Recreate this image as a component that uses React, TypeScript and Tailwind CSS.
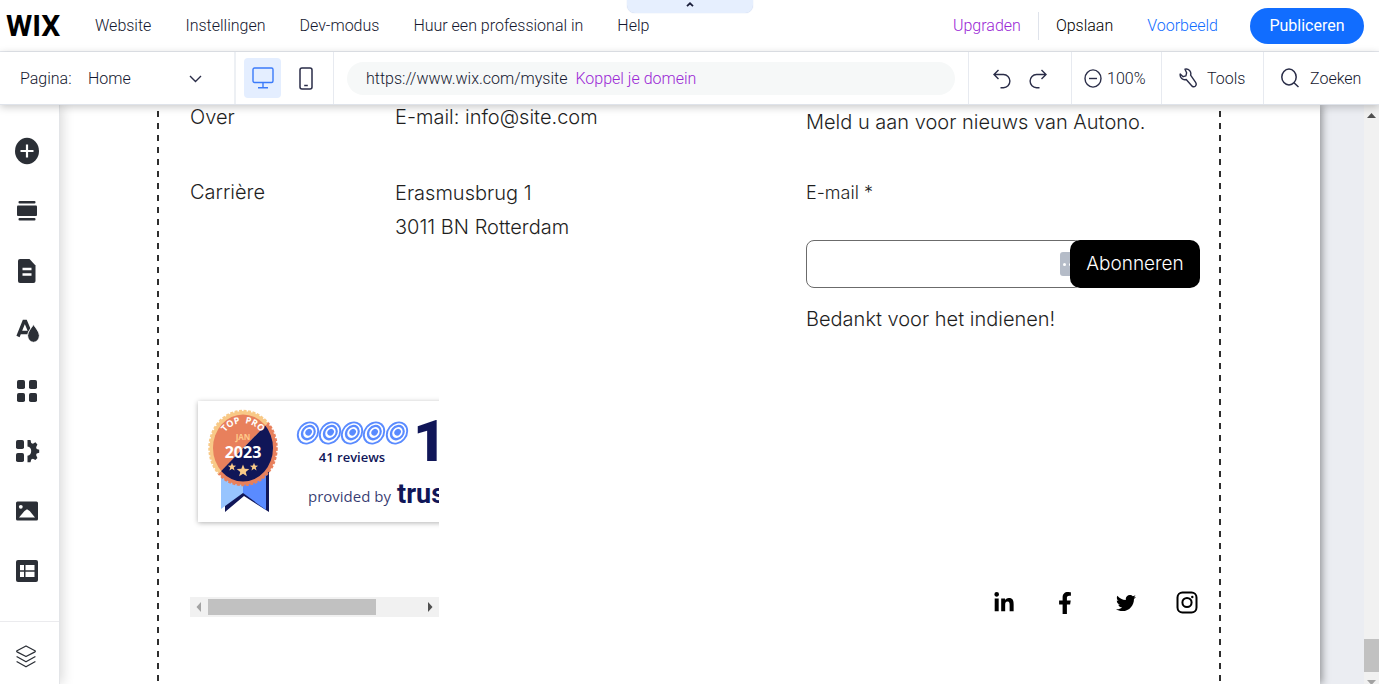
import { useState } from 'react';
import type { ReactNode } from 'react';
import { FaFacebookF, FaLinkedinIn, FaTwitter } from 'react-icons/fa';

const menuItems = ['Website', 'Instellingen', 'Dev-modus', 'Huur een professional in', 'Help'];

const sidebarItems: { label: string; icon: ReactNode }[] = [
  {
    label: 'Elementen toevoegen',
    icon: (
      <>
        <ellipse cx="13" cy="14" rx="12" ry="13.2" />
        <path d="M13 7.5v13M6.5 14h13" stroke="#fff" strokeWidth="2.2" />
      </>
    ),
  },
  {
    label: 'Secties',
    icon: (
      <>
        <rect x="4.5" y="4" width="17" height="2.4" rx="1" />
        <rect x="3" y="8.5" width="20" height="10.5" rx="1" />
        <rect x="4.5" y="21" width="17" height="2.4" rx="1" />
      </>
    ),
  },
  {
    label: "Pagina's",
    icon: (
      <>
        <path d="M6 2h9.5L21.5 8.5V24a2 2 0 0 1-2 2H6a2 2 0 0 1-2-2V4a2 2 0 0 1 2-2z" />
        <path d="M8.5 12h9M8.5 17.5h9" stroke="#fff" strokeWidth="2.4" />
      </>
    ),
  },
  {
    label: 'Design',
    icon: (
      <>
        <path d="M4 19.5 10 4.5h1.6l4 9.5M6.2 15.5h8" fill="none" stroke="#2b2f36" strokeWidth="3.4" />
        <path
          d="M19.5 7.5c2.6 4 5.9 7.3 5.9 11.2a5.9 6.6 0 0 1-11.8 0c0-3.9 3.3-7.2 5.9-11.2z"
          stroke="#fff"
          strokeWidth="1"
        />
      </>
    ),
  },
  {
    label: 'Apps',
    icon: (
      <>
        <rect x="3" y="3" width="8" height="9" rx="1.8" />
        <rect x="15" y="3" width="8" height="9" rx="1.8" />
        <rect x="3" y="16" width="8" height="9" rx="1.8" />
        <rect x="15" y="16" width="8" height="9" rx="1.8" />
      </>
    ),
  },
  {
    label: 'Mijn zakelijk',
    icon: (
      <>
        <rect x="2" y="3" width="8" height="9" rx="1.8" />
        <rect x="2" y="16" width="8" height="9" rx="1.8" />
        <path d="M13.5 3h3l.7 3 1.7.8 2.5-1.5 2 2.2-1.3 2.8.6 1.7 2.5.7v3l-2.5.8-.6 1.6 1.3 2.8-2 2.2-2.5-1.4-1.7.8-.7 2.7h-3v-6.5a4.3 4.7 0 0 0 0-9.3z" />
      </>
    ),
  },
  {
    label: 'Media',
    icon: (
      <>
        <rect x="2" y="4.5" width="22" height="19" rx="1.5" />
        <circle cx="6.8" cy="9.8" r="1.9" fill="#fff" />
        <path d="M5 20.5 10.5 14l2.5-1.8 2.7 1.8 5.3 6.5z" fill="#fff" />
      </>
    ),
  },
  {
    label: 'CMS',
    icon: (
      <>
        <rect x="2" y="3" width="22" height="22" rx="2" />
        <path d="M6 8h4v5.2H6zM11.5 8h9v5.2h-9zM6 14.8h4V20H6zM11.5 14.8h9V20h-9z" fill="#fff" />
      </>
    ),
  },
];

const targetCenters = [110, 132, 154, 176, 199];
const starPath = 'M0-1 .26-.33 .97-.31 .42.14 .6.82 0 .43-.6.82-.42.14-.97-.31-.26-.33z';

const socials = [
  { label: 'LinkedIn', icon: <FaLinkedinIn className="size-[22px]" /> },
  { label: 'Facebook', icon: <FaFacebookF className="size-[22px]" /> },
  { label: 'Twitter', icon: <FaTwitter className="size-5" /> },
  {
    label: 'Instagram',
    icon: (
      <svg className="h-6 w-6" viewBox="0 0 24 24" fill="none" stroke="currentColor" strokeWidth="2">
        <rect x="2.5" y="1.5" width="19" height="20" rx="5" />
        <circle cx="12" cy="11.5" r="4.6" />
        <circle cx="17.3" cy="6" r="1.2" fill="currentColor" stroke="none" />
      </svg>
    ),
  },
];

function Header() {
  return (
    <header className="relative flex h-[52px] shrink-0 items-center border-b border-[#e7eaf0] pr-[15px] pl-[6px]">
      <button
        aria-label="Balk inklappen"
        className="absolute top-0 left-1/2 flex h-[13px] w-[126px] -translate-x-1/2 items-center justify-center rounded-b-lg bg-[#e6effe] shadow-[0_0_1px_#b6c6e6]"
      >
        <svg className="mb-1 h-[5px] w-2" viewBox="0 0 8 5" fill="none" stroke="#1b1f3b" strokeWidth="1.8">
          <path d="M1 4.2 4 1.3l3 2.9" />
        </svg>
      </button>
      <a href="#" className="w-14 text-[30px] leading-9 font-bold text-black">
        WIX
      </a>
      <nav className="ml-[33px] flex gap-[34px]">
        {menuItems.map((item) => (
          <a key={item} href="#" className="whitespace-nowrap">
            {item}
          </a>
        ))}
      </nav>
      <div className="ml-auto flex items-center">
        <a href="#" className="text-[#9a27d5]">
          Upgraden
        </a>
        <div className="mx-[17px] h-7 w-px bg-[#dfe3eb]" />
        <button className="text-black">Opslaan</button>
        <button className="ml-[34px] text-[#116dff]">Voorbeeld</button>
        <button className="ml-8 h-9 w-[114px] rounded-full bg-[#116dff] font-normal text-white">Publiceren</button>
      </div>
    </header>
  );
}

function Toolbar() {
  const [device, setDevice] = useState('desktop');

  return (
    <div className="relative z-20 flex h-[53px] shrink-0 items-stretch border-b border-[#dfe3ea] bg-white shadow-[0_2px_8px_rgba(0,0,0,0.22)]">
      <div className="relative flex w-[236px] items-center border-r-2 border-[#edf0f4] pt-0.5 pl-5">
        <label htmlFor="page" className="w-[68px]">
          Pagina:
        </label>
        <select id="page" className="w-[120px] appearance-none bg-transparent">
          <option>Home</option>
        </select>
        <svg className="pointer-events-none absolute right-8 h-2 w-[13px]" viewBox="0 0 13 8" fill="none" stroke="#2a2d48" strokeWidth="1.4">
          <path d="M1 1l5.5 5.5L12 1" />
        </svg>
      </div>
      <div className="flex w-[98px] items-center border-r border-[#e7eaf0] pl-2">
        <button
          aria-label="Desktop"
          aria-pressed={device === 'desktop'}
          onClick={() => setDevice('desktop')}
          className="flex h-10 w-[37px] items-center justify-center rounded bg-[#e4eeff]"
        >
          <svg className="h-[22px] w-[22px]" viewBox="0 0 22 22" fill="none" stroke="#3b7bfa" strokeWidth="1.4">
            <rect x="1" y="1" width="20" height="14.5" rx="1.5" />
            <path d="M11 15.5v5M6 20.7h10" />
          </svg>
        </button>
        <button
          aria-label="Mobiel"
          aria-pressed={device === 'mobile'}
          onClick={() => setDevice('mobile')}
          className="flex h-10 flex-1 items-center justify-center pr-0.5"
        >
          <svg className="h-[23px] w-[14px]" viewBox="0 0 14 23" fill="none" stroke="#2a2d48" strokeWidth="1.5">
            <rect x="1" y="1" width="12" height="21" rx="2" />
            <path d="M5.2 18.5h3.6" />
          </svg>
        </button>
      </div>
      <div className="flex flex-1 items-center px-[13px]">
        <div className="flex h-[33px] flex-1 items-center gap-2 rounded-full bg-[#f6f8f8] px-[19px] pt-0.5">
          <span>https://www.wix.com/mysite</span>
          <a href="#" className="text-[#9a27d5]">
            Koppel je domein
          </a>
        </div>
      </div>
      <div className="flex w-[103px] items-center justify-center gap-[18px] border-l border-[#e7eaf0] pt-0.5">
        <button aria-label="Ongedaan maken">
          <svg className="h-5 w-[18px]" viewBox="0 0 18 20" fill="none" stroke="#2a2d48" strokeWidth="1.4">
            <path d="M5.5 1 1 5.5 5.5 10M1 5.5h9.5a6.3 6.5 0 0 1 0 13.2H7.5" />
          </svg>
        </button>
        <button aria-label="Opnieuw">
          <svg className="h-5 w-[18px]" viewBox="0 0 18 20" fill="none" stroke="#2a2d48" strokeWidth="1.4">
            <path d="M12.5 1 17 5.5 12.5 10M17 5.5H7.5a6.3 6.5 0 0 0 0 13.2h3" />
          </svg>
        </button>
      </div>
      <button className="flex w-[90px] items-center gap-[5px] border-l border-[#e7eaf0] pl-3">
        <svg className="h-[19px] w-[18px] shrink-0" viewBox="0 0 18 19" fill="none" stroke="#2a2d48" strokeWidth="1.4">
          <ellipse cx="9" cy="9.5" rx="8" ry="8.6" />
          <path d="M5 9.5h8" />
        </svg>
        <span className="pt-0.5">100%</span>
      </button>
      <button className="flex w-[102px] items-center gap-[10px] border-l border-[#e7eaf0] pl-[17px]">
        <svg className="h-5 w-[18px]" viewBox="0 0 18 20" fill="none" stroke="#2a2d48" strokeWidth="1.4" strokeLinejoin="round">
          <path d="M6 1.2c3.6-.8 6.7 2.2 5.6 6l5 7.2c1 1.6.6 3-.4 3.9-1 .8-2.5.7-3.5-.6l-5.5-6.2C3.8 12.7.6 9.5 1.2 6l2.9 2.7 2.8-.9.7-3z" />
        </svg>
        <span className="pt-0.5">Tools</span>
      </button>
      <button className="flex w-[116px] items-center gap-[11px] border-l border-[#e7eaf0] pl-[17px]">
        <svg className="h-5 w-[18px]" viewBox="0 0 18 20" fill="none" stroke="#2a2d48" strokeWidth="1.5">
          <ellipse cx="8" cy="9" rx="7.2" ry="7.9" />
          <path d="M13 14.8l4.5 4.2" />
        </svg>
        <span className="pt-0.5">Zoeken</span>
      </button>
    </div>
  );
}

function Sidebar() {
  return (
    <aside className="z-10 flex w-[60px] shrink-0 flex-col border-r border-[#e3e5e8] bg-white pt-4 shadow-[2px_0_12px_rgba(0,0,0,0.16)]">
      {sidebarItems.map(({ label, icon }) => (
        <button key={label} aria-label={label} className="flex h-[60px] shrink-0 items-center justify-center pr-[5px]">
          <svg className="h-7 w-[26px]" viewBox="0 0 26 28" fill="#2b2f36">
            {icon}
          </svg>
        </button>
      ))}
      <button aria-label="Lagen" className="mt-auto flex h-[63px] items-center justify-center border-t border-[#ebebee] pt-1.5 pr-[7px]">
        <svg className="h-[23px] w-5" viewBox="0 0 20 23" fill="none" stroke="#2b2f36" strokeWidth="1.3" strokeLinejoin="round">
          <path d="M10 1l9 4.8q.6.5 0 1L10 11.5 1 6.8q-.6-.5 0-1z" />
          <path d="M.6 11.5 10 16.8l9.4-5.3M.6 16.5 10 21.8l9.4-5.3" />
        </svg>
      </button>
    </aside>
  );
}

// Award card, wider than the frame it sits in
function ReviewBadge() {
  return (
    <svg className="ml-2 h-[121px] w-[300px] bg-white shadow-[0_1px_5px_rgba(0,0,0,0.3)]" viewBox="0 0 300 121">
      <defs>
        <path id="medal-arc" d="M22 47A23 25 0 0 1 68 47" />
        <clipPath id="medal-upper">
          <path d="M0 94 90 1V0H0z" />
        </clipPath>
        <clipPath id="medal-lower">
          <path d="M0 94 90 1V121H0z" />
        </clipPath>
      </defs>
      <path d="M27 104v7l19-16 25 16V62H46z" fill="#101658" />
      <path d="M23 65h22v27L23 108z" fill="#97c4fe" />
      <path d="M45 65h23v44L45 92z" fill="#5a8bff" />
      <g clipPath="url(#medal-upper)">
        <ellipse cx="45" cy="47" rx="33.5" ry="37" fill="#f8c987" stroke="#f8c987" strokeWidth="2.5" strokeDasharray="3 1.5" />
        <ellipse cx="45" cy="47" rx="30" ry="33.5" fill="#e8805c" />
      </g>
      <g clipPath="url(#medal-lower)">
        <ellipse cx="45" cy="47" rx="33.5" ry="37" fill="#e8805c" stroke="#e8805c" strokeWidth="2.5" strokeDasharray="3 1.5" />
        <ellipse cx="45" cy="47" rx="30" ry="33.5" fill="#101658" />
      </g>
      <g className="font-['Open_Sans',sans-serif] font-bold">
        <text fontSize="9" fill="#fff" textAnchor="middle">
          <textPath href="#medal-arc" startOffset="50%">
            TOP&#160; PRO
          </textPath>
        </text>
        <text x="45" y="39" fontSize="8" textAnchor="middle" fill="#ffc98a">
          JAN
        </text>
        <text x="45" y="57" fontSize="16" textAnchor="middle" fill="#fff">
          2023
        </text>
      </g>
      <g fill="#f8c987">
        <path d={starPath} transform="translate(34 66) scale(4.2)" />
        <path d={starPath} transform="translate(45 70) scale(6.5)" />
        <path d={starPath} transform="translate(56 66) scale(4.2)" />
      </g>
      {targetCenters.map((x) => (
        <g key={x} transform={`translate(${x} 32) rotate(-50)`}>
          <ellipse rx="12.3" ry="10.3" fill="#5a8bff" />
          <ellipse rx="10.4" ry="8.4" fill="#fff" />
          <ellipse cx="0.5" rx="8.3" ry="6.9" fill="#5a8bff" />
          <ellipse cx="0.7" rx="5.8" ry="4.8" fill="#fff" />
          <ellipse cx="1" rx="3.6" ry="3" fill="#5a8bff" />
        </g>
      ))}
      <g fill="#101658" className="font-['Open_Sans',sans-serif] font-normal">
        <text x="154" y="61" fontSize="13" fontWeight="600" textAnchor="middle">
          41 reviews
        </text>
        <text x="110" y="101" fontSize="15" fillOpacity="0.85">
          provided by
        </text>
      </g>
      <g fill="#101658" className="font-['Roboto',sans-serif]">
        <text x="199" y="102" fontSize="27" fontWeight="700">
          trus
        </text>
        <text x="215" y="60" fontSize="58" fontWeight="900">
          1
        </text>
      </g>
    </svg>
  );
}

function ReviewWidget() {
  return (
    <div className="flex h-[224px] w-[249px] flex-col justify-between overflow-hidden pt-2">
      <ReviewBadge />
      <div className="flex h-5 shrink-0 items-center bg-[#f1f1f1]">
        <svg className="h-[10px] w-[18px]" viewBox="0 0 18 10" fill="#a3a3a3">
          <path d="M11 0v10L6.5 5z" />
        </svg>
        <div className="h-4 w-[168px] bg-[#c1c1c1]" />
        <svg className="ml-auto h-[10px] w-[18px]" viewBox="0 0 18 10" fill="#505050">
          <path d="M7 0v10l4.5-5z" />
        </svg>
      </div>
    </div>
  );
}

function SubscribeForm() {
  const [email, setEmail] = useState('');

  return (
    <form onSubmit={(e) => e.preventDefault()} className="flex w-[394px] flex-col pt-[5px]">
      <p className="leading-6">Meld u aan voor nieuws van Autono.</p>
      <label htmlFor="email" className="mt-[47px] text-[18px] leading-6">
        E-mail *
      </label>
      <div className="relative mt-[35px] flex">
        <input
          id="email"
          type="email"
          value={email}
          onChange={(e) => setEmail(e.target.value)}
          className="h-12 min-w-0 flex-1 rounded-lg border border-[#6b6b6b] bg-white px-3 outline-none"
        />
        <span className="absolute top-3 right-[124px] flex h-6 w-4 items-center gap-[3px] rounded-[3px] bg-[#b5bcc8] pl-[3px]">
          <i className="size-[3px] rounded-full bg-white" />
          <i className="size-[3px] rounded-full bg-white" />
        </span>
        <button type="submit" className="relative -ml-3 h-12 w-[130px] rounded-[10px] bg-black text-[19px] text-white">
          Abonneren
        </button>
      </div>
      <p className="mt-[19px] leading-6">Bedankt voor het indienen!</p>
    </form>
  );
}

function Guide() {
  return <div className="w-[2px] shrink-0 bg-[repeating-linear-gradient(to_bottom,transparent_0_6px,#2e2e2e_6px_12px)]" />;
}

function Canvas() {
  return (
    <main className="flex flex-1 bg-[#ebedf2]">
      <div className="flex flex-1 justify-between bg-white shadow-[2px_0_8px_rgba(0,0,0,0.4)]">
        <div className="w-[97px] shrink-0" />
        <Guide />
        <div className="flex flex-1 flex-col pr-[19px] pl-[31px] font-['Inter',sans-serif] text-xl font-light text-[#1f1f1f]">
          <div className="flex">
            <div className="flex w-[205px] flex-col gap-[51px] leading-6">
              <a href="#">Over</a>
              <a href="#">Carrière</a>
            </div>
            <div className="flex-1">
              <p className="leading-6">E-mail: info@site.com</p>
              <address className="mt-[47px] leading-[34px] not-italic">
                Erasmusbrug 1<br />
                3011 BN Rotterdam
              </address>
            </div>
            <SubscribeForm />
          </div>
          <div className="mt-[62px] flex items-end justify-between">
            <ReviewWidget />
            <div className="mr-px flex gap-[37px] text-black">
              {socials.map(({ label, icon }) => (
                <a key={label} href="#" aria-label={label} className="flex h-7 w-6 items-center justify-center">
                  {icon}
                </a>
              ))}
            </div>
          </div>
        </div>
        <Guide />
        <div className="w-[99px] shrink-0" />
      </div>
      <div className="w-11 shrink-0" />
      <div className="flex w-[15px] shrink-0 flex-col items-center bg-[#f1f1f1] pt-2">
        <svg className="h-[5px] w-[9px]" viewBox="0 0 9 5" fill="#505050">
          <path d="M0 5 4.5 0 9 5z" />
        </svg>
        <div className="mt-auto h-[33px] w-full bg-[#c1c1c1]" />
        <svg className="mt-2 h-1 w-[9px]" viewBox="0 0 9 4" fill="#a3a3a3">
          <path d="M0 0h9L4.5 5z" />
        </svg>
      </div>
    </main>
  );
}

export default function App() {
  return (
    <div className="flex h-screen flex-col overflow-hidden bg-white font-['Roboto',sans-serif] text-base font-light text-[#14172f]">
      <Header />
      <Toolbar />
      <div className="flex min-h-0 flex-1">
        <Sidebar />
        <Canvas />
      </div>
    </div>
  );
}
